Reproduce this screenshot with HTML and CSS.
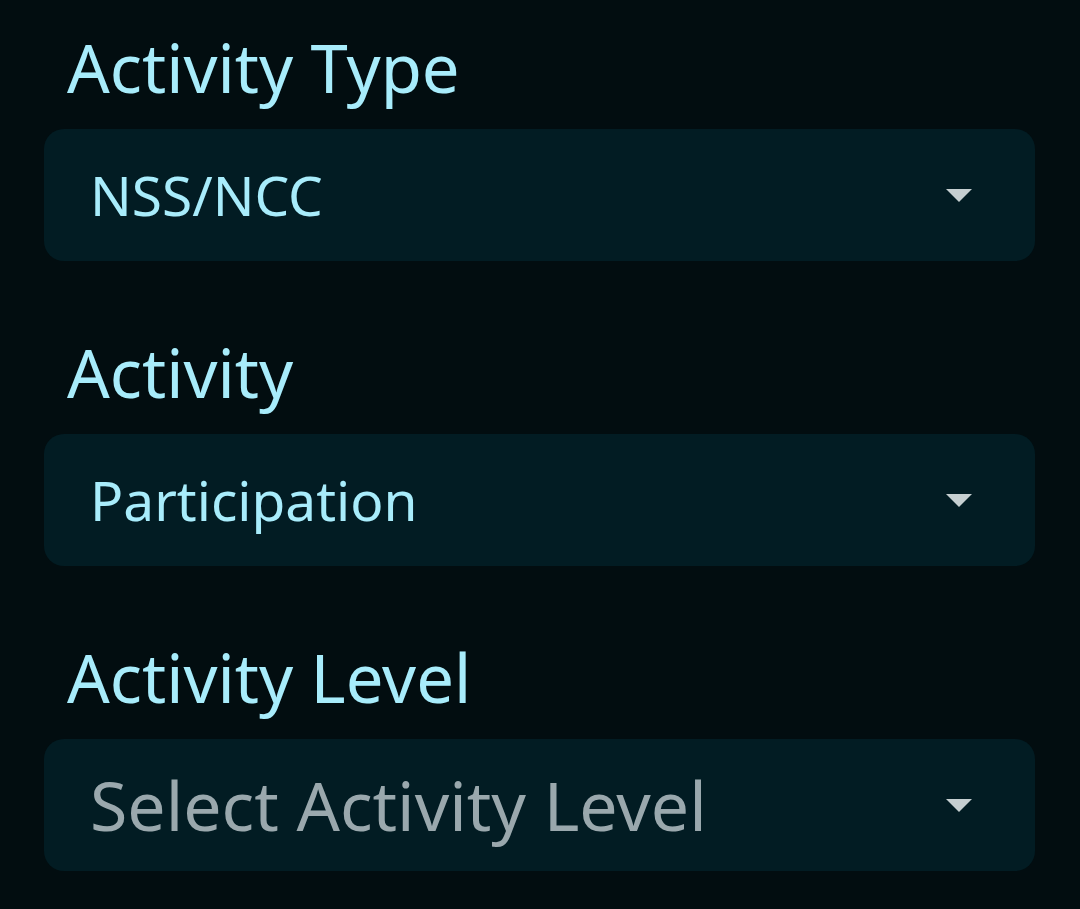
FILE: index.html
```html
<!DOCTYPE html>
<html>
<head>
<meta charset="utf-8">
<link rel="stylesheet" href="styles.css">
</head>
<body>
<div class="form">
  <div class="field">
    <div class="label">Activity Type</div>
    <div class="select">
      <span class="value">NSS/NCC</span>
      <svg class="arrow" width="26" height="13" viewBox="0 0 26 13"><polygon points="0,0 26,0 13,13" /></svg>
    </div>
  </div>
  <div class="field">
    <div class="label">Activity</div>
    <div class="select">
      <span class="value">Participation</span>
      <svg class="arrow" width="26" height="13" viewBox="0 0 26 13"><polygon points="0,0 26,0 13,13" /></svg>
    </div>
  </div>
  <div class="field">
    <div class="label">Activity Level</div>
    <div class="select">
      <span class="value placeholder">Select Activity Level</span>
      <svg class="arrow" width="26" height="13" viewBox="0 0 26 13"><polygon points="0,0 26,0 13,13" /></svg>
    </div>
  </div>
</div>
</body>
</html>
```
FILE: styles.css
```css
html, body {
  margin: 0;
  padding: 0;
  background: #020d10;
  height: 100%;
}
body {
  font-family: "Noto Sans", "Open Sans", sans-serif;
  overflow: hidden;
}
.form {
  padding: 29px 45px 0 44px;
  display: flex;
  flex-direction: column;
  gap: 73px;
}
.field {
  display: flex;
  flex-direction: column;
  gap: 24px;
}
.label {
  color: #a8ecfb;
  font-size: 67px;
  line-height: 76px;
  padding-left: 23px;
}
.select {
  height: 132px;
  background: #021c23;
  border-radius: 20px;
  display: flex;
  align-items: center;
  justify-content: space-between;
  padding: 0 63px 0 46px;
}
.value {
  color: #a8ecfb;
  font-size: 55px;
  line-height: 70px;
}
.value.placeholder {
  color: #9aa8ad;
  font-size: 68px;
}
.arrow {
  fill: #c6cfd1;
}
```
